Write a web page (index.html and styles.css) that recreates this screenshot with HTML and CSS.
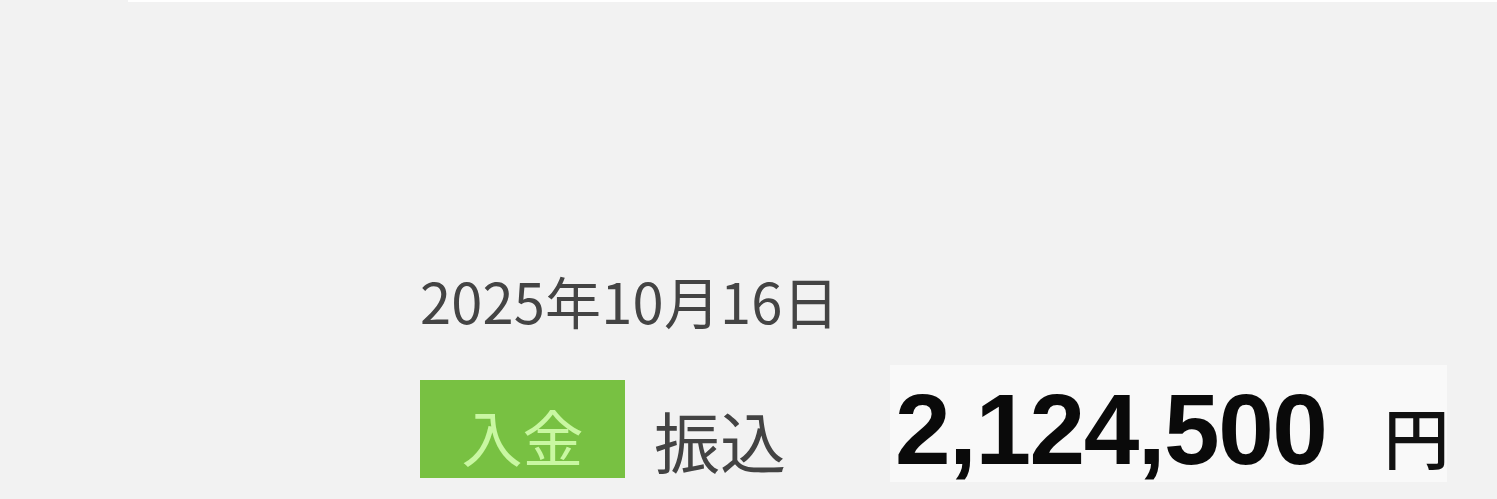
FILE: index.html
```html
<!DOCTYPE html>
<html lang="ja">
<head>
<meta charset="utf-8">
<title>入金明細</title>
<link rel="stylesheet" href="styles.css">
</head>
<body>
<div class="topline"></div>
<main class="entry">
  <div class="date">2025年10月16日</div>
  <div class="row">
    <div class="badge">入金</div>
    <div class="method">振込</div>
    <div class="amount-box">
      <span class="amount">2,124,500</span>
      <span class="yen">円</span>
    </div>
  </div>
</main>
</body>
</html>
```

FILE: styles.css
```css
html, body {
  margin: 0;
  padding: 0;
  background: #f2f2f2;
  height: 499px;
  overflow: hidden;
}

body {
  font-family: "Noto Sans CJK JP", "Liberation Sans", sans-serif;
  color: #444;
}

.topline {
  margin-left: 128px;
  height: 2px;
  background: #ffffff;
}

.entry {
  padding: 262px 0 0 420px;
}

.date {
  font-size: 56px;
  line-height: 72px;
  color: #444;
  letter-spacing: 0.2px;
  height: 101px;
}

.row {
  display: flex;
  align-items: flex-start;
}

.badge {
  margin-top: 15px;
  width: 205px;
  height: 98px;
  background: #78c142;
  color: #c9f7a2;
  font-size: 61px;
  line-height: 88px;
  text-align: center;
  padding-top: 12px;
  box-sizing: border-box;
}

.method {
  margin-left: 29px;
  margin-top: 30px;
  font-size: 66px;
  line-height: 88px;
  color: #434343;
}

.amount-box {
  margin-left: 104px;
  width: 557px;
  height: 117px;
  background: #f9f9f9;
  box-sizing: border-box;
  padding-left: 5px;
  padding-top: 6px;
  display: flex;
  align-items: baseline;
}

.amount {
  font-family: "Liberation Sans", Arial, sans-serif;
  font-weight: bold;
  font-size: 100px;
  line-height: 117px;
  letter-spacing: -1.5px;
  color: #0a0a0a;
}

.yen {
  margin-left: 57px;
  font-size: 66px;
  color: #111;
  font-weight: 500;
}
```
